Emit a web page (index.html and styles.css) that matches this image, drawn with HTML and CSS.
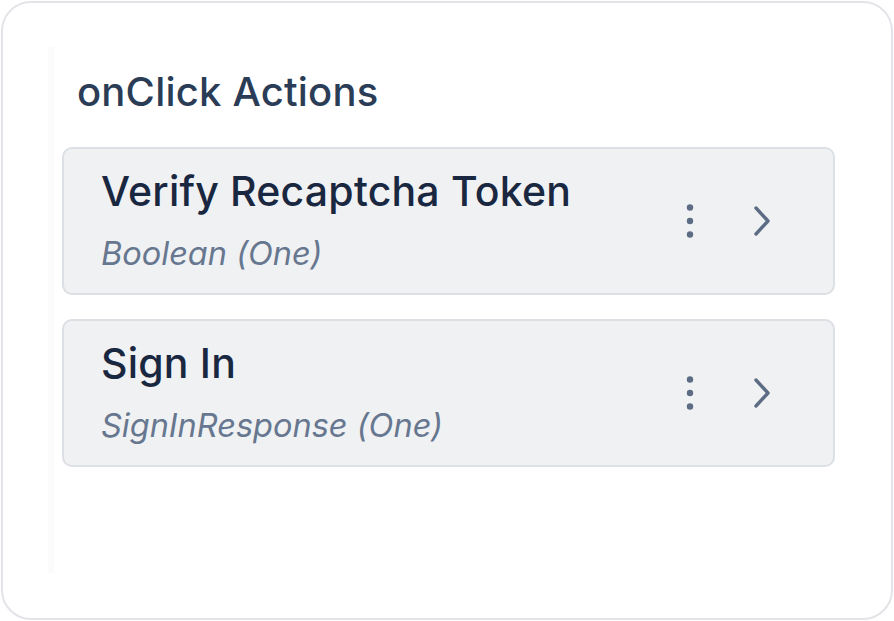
FILE: index.html
```html
<!DOCTYPE html>
<html lang="en">
<head>
<meta charset="utf-8">
<title>onClick Actions</title>
<link rel="stylesheet" href="styles.css">
</head>
<body>
<div class="frame">
  <section class="panel">
    <h2 class="panel-title">onClick Actions</h2>
    <div class="action-list">
      <div class="action">
        <div class="action-text">
          <div class="action-name">Verify Recaptcha Token</div>
          <div class="action-type">Boolean (One)</div>
        </div>
        <div class="action-icons">
          <svg class="kebab" width="10" height="36" viewBox="0 0 10 36"><circle cx="5" cy="4.5" r="3.2"/><circle cx="5" cy="18" r="3.2"/><circle cx="5" cy="31.5" r="3.2"/></svg>
          <svg class="chevron" width="20" height="32" viewBox="0 0 20 32"><polyline points="4,3 16,16 4,29"/></svg>
        </div>
      </div>
      <div class="action">
        <div class="action-text">
          <div class="action-name">Sign In</div>
          <div class="action-type">SignInResponse (One)</div>
        </div>
        <div class="action-icons">
          <svg class="kebab" width="10" height="36" viewBox="0 0 10 36"><circle cx="5" cy="4.5" r="3.2"/><circle cx="5" cy="18" r="3.2"/><circle cx="5" cy="31.5" r="3.2"/></svg>
          <svg class="chevron" width="20" height="32" viewBox="0 0 20 32"><polyline points="4,3 16,16 4,29"/></svg>
        </div>
      </div>
    </div>
  </section>
</div>
</body>
</html>
```

FILE: styles.css
```css
* { box-sizing: border-box; }
html, body { margin: 0; padding: 0; background: #ffffff; }
body {
  width: 894px;
  height: 621px;
  padding: 1px;
  font-family: Inter, "Noto Sans", sans-serif;
}
.frame {
  width: 892px;
  height: 619px;
  border: 2px solid #e2e4e8;
  border-radius: 30px;
  background: #ffffff;
  padding: 44px 0 0 45px;
}
.panel {
  width: 801px;
  height: 526px;
  background: #ffffff;
  border-left: 6px solid #fbfbfc;
  padding: 14px 14px 14px 8px;
}
.panel-title {
  margin: 7px 0 31px 15px;
  font-size: 40px;
  line-height: 48px;
  font-weight: 500;
  letter-spacing: 0.2px;
  color: #2b3d56;
}
.action-list {
  display: flex;
  flex-direction: column;
  gap: 24px;
}
.action {
  border: 2px solid #dcdfe4;
  border-radius: 10px;
  background: #f0f1f3;
  display: flex;
  align-items: center;
  justify-content: space-between;
  padding: 18px 61px 19px 37px;
}
.action-text {
  display: flex;
  flex-direction: column;
  gap: 19px;
}
.action-name {
  font-size: 41px;
  line-height: 48px;
  font-weight: 500;
  letter-spacing: 0.2px;
  color: #1a2740;
}
.action-type {
  font-size: 32.5px;
  line-height: 40px;
  font-style: italic;
  color: #66778f;
}
.action-icons {
  display: flex;
  align-items: center;
  gap: 57px;
}
.kebab { fill: #5c6c84; display: block; }
.chevron {
  display: block;
  fill: none;
  stroke: #5c6c84;
  stroke-width: 3.4;
  stroke-linecap: round;
  stroke-linejoin: round;
}
```
